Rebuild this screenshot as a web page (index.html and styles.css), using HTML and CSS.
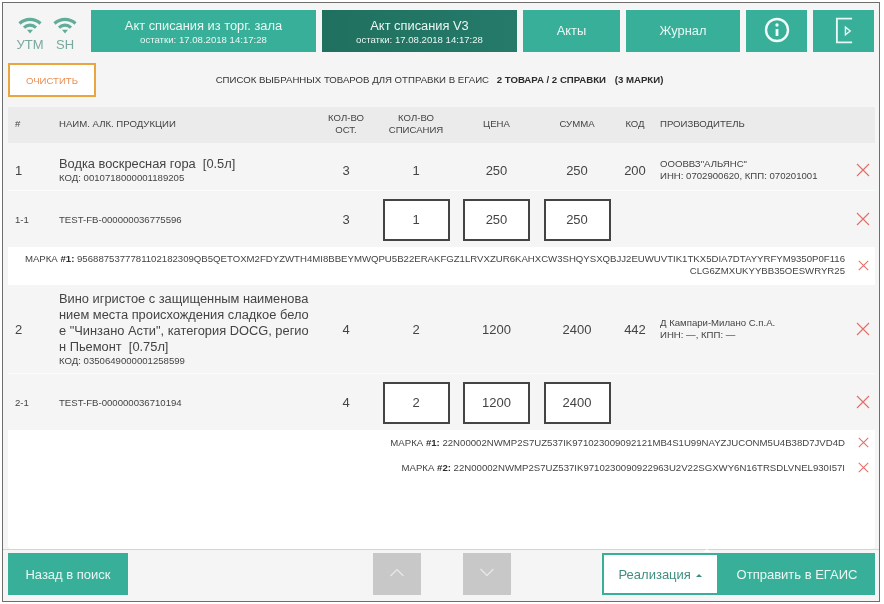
FILE: index.html
```html
<!DOCTYPE html>
<html lang="ru">
<head>
<meta charset="utf-8">
<title>Акт списания</title>
<link rel="stylesheet" href="styles.css">
</head>
<body>
<div class="frame">
  <header class="topbar">
    <div class="signals">
      <div class="signal">
        <svg class="wifi" viewBox="0 0 24 17"><path d="M1.500 6.500C7.500 .9 16.500 .9 22.500 6.500" /><path d="M6 10.600C9.500 7.400 14.500 7.400 18 10.600" /><polygon class="dot" points="9,12.800 15,12.800 12,16.400" /></svg>
        <span>УТМ</span>
      </div>
      <div class="signal">
        <svg class="wifi" viewBox="0 0 24 17"><path d="M1.500 6.500C7.500 .9 16.500 .9 22.500 6.500" /><path d="M6 10.600C9.500 7.400 14.500 7.400 18 10.600" /><polygon class="dot" points="9,12.800 15,12.800 12,16.400" /></svg>
        <span>SH</span>
      </div>
    </div>
    <div class="tab tab-a"><b>Акт списания из торг. зала</b><small>остатки: 17.08.2018 14:17:28</small></div>
    <div class="tab tab-b active"><b>Акт списания V3</b><small>остатки: 17.08.2018 14:17:28</small></div>
    <div class="tab tab-c"><b>Акты</b></div>
    <div class="tab tab-d"><b>Журнал</b></div>
    <div class="tab tab-e">
      <svg class="ic" viewBox="0 0 26 26"><circle cx="13" cy="13" r="11" /><line x1="13" y1="12" x2="13" y2="19" /><circle class="fill" cx="13" cy="8" r="1.700" /></svg>
    </div>
    <div class="tab tab-e">
      <svg class="ic-exit" viewBox="0 0 20 28"><path d="M18 1.500H2V26.500H18" /><path class="thin" d="M11 10.500L16 14.500L11 18.500Z" /></svg>
    </div>
  </header>

  <div class="toolbar">
    <button class="clear">ОЧИСТИТЬ</button>
    <div class="summary">СПИСОК ВЫБРАННЫХ ТОВАРОВ ДЛЯ ОТПРАВКИ В ЕГАИС <strong>2 ТОВАРА / 2 СПРАВКИ</strong> <strong class="marks">(3 МАРКИ)</strong></div>
  </div>

  <div class="grid head">
    <div class="num">#</div>
    <div>НАИМ. АЛК. ПРОДУКЦИИ</div>
    <div class="c">КОЛ-ВО<br>ОСТ.</div>
    <div class="c">КОЛ-ВО<br>СПИСАНИЯ</div>
    <div class="c">ЦЕНА</div>
    <div class="c">СУММА</div>
    <div class="c">КОД</div>
    <div class="maker">ПРОИЗВОДИТЕЛЬ</div>
  </div>

  <main class="list">
    <div class="grid row row-1">
      <div class="num val">1</div>
      <div class="name">Водка воскресная гора&nbsp; [0.5л]<small>КОД: 0010718000001189205</small></div>
      <div class="c val">3</div>
      <div class="c val">1</div>
      <div class="c val">250</div>
      <div class="c val">250</div>
      <div class="c val">200</div>
      <div class="maker">ОООВВЗ"АЛЬЯНС"<br>ИНН: 0702900620, КПП: 070201001</div>
      <svg class="x" viewBox="0 0 14 14"><path d="M1 1L13 13M13 1L1 13" /></svg>
    </div>
    <div class="grid row sub">
      <div class="num tiny">1-1</div>
      <div class="tiny">TEST-FB-000000036775596</div>
      <div class="c val">3</div>
      <div class="c"><div class="box">1</div></div>
      <div class="c"><div class="box">250</div></div>
      <div class="c"><div class="box">250</div></div>
      <div></div>
      <div></div>
      <svg class="x" viewBox="0 0 14 14"><path d="M1 1L13 13M13 1L1 13" /></svg>
    </div>
    <div class="stamps stamps-1">
      <div class="stamp">
        <div class="code">МАРКА <b>#1:</b> 9568875377781102182309QB5QETOXM2FDYZWTH4MI8BBEYMWQPU5B22ERAKFGZ1LRVXZUR6KAHXCW3SHQYSXQBJJ2EUWUVTIK1TKX5DIA7DTAYYRFYM9350P0F116<br>CLG6ZMXUKYYBB35OESWRYR25</div>
        <svg class="x small" viewBox="0 0 14 14"><path d="M1 1L13 13M13 1L1 13" /></svg>
      </div>
    </div>
    <div class="grid row row-2">
      <div class="num val">2</div>
      <div class="name">Вино игристое с защищенным наименова<br>нием места происхождения сладкое бело<br>е "Чинзано Асти", категория DOCG, регио<br>н Пьемонт&nbsp; [0.75л]<small>КОД: 0350649000001258599</small></div>
      <div class="c val">4</div>
      <div class="c val">2</div>
      <div class="c val">1200</div>
      <div class="c val">2400</div>
      <div class="c val">442</div>
      <div class="maker">Д Кампари-Милано С.п.А.<br>ИНН: —, КПП: —</div>
      <svg class="x" viewBox="0 0 14 14"><path d="M1 1L13 13M13 1L1 13" /></svg>
    </div>
    <div class="grid row sub">
      <div class="num tiny">2-1</div>
      <div class="tiny">TEST-FB-000000036710194</div>
      <div class="c val">4</div>
      <div class="c"><div class="box">2</div></div>
      <div class="c"><div class="box">1200</div></div>
      <div class="c"><div class="box">2400</div></div>
      <div></div>
      <div></div>
      <svg class="x" viewBox="0 0 14 14"><path d="M1 1L13 13M13 1L1 13" /></svg>
    </div>
    <div class="stamps stamps-2">
      <div class="stamp line">
        <div class="code">МАРКА <b>#1:</b> 22N00002NWMP2S7UZ537IK971023009092121MB4S1U99NAYZJUCONM5U4B38D7JVD4D</div>
        <svg class="x small" viewBox="0 0 14 14"><path d="M1 1L13 13M13 1L1 13" /></svg>
      </div>
      <div class="stamp line">
        <div class="code">МАРКА <b>#2:</b> 22N00002NWMP2S7UZ537IK9710230090922963U2V22SGXWY6N16TRSDLVNEL930I57I</div>
        <svg class="x small" viewBox="0 0 14 14"><path d="M1 1L13 13M13 1L1 13" /></svg>
      </div>
    </div>
  </main>

  <footer class="footer">
    <button class="btn back">Назад в поиск</button>
    <div class="pager">
      <button class="page"><svg viewBox="0 0 16 9"><path d="M1.500 8L8 1.500L14.500 8" /></svg></button>
      <button class="page"><svg viewBox="0 0 16 9"><path d="M1.500 1L8 7.500L14.500 1" /></svg></button>
    </div>
    <div class="send">
      <button class="type">Реализация <i class="caret"></i></button>
      <button class="btn submit">Отправить в ЕГАИС</button>
    </div>
  </footer>
</div>
</body>
</html>
```
FILE: styles.css
```css
* { box-sizing: border-box; }
html, body { margin: 0; padding: 0; background: #fff; }
body { font-family: "Liberation Sans", Arial, sans-serif; color: #444; }
.frame {
  width: 878px; height: 600px; margin: 2px 0 0 2px;
  border: 1px solid #6e6e6e; background: #f5f5f5;
  display: flex; flex-direction: column; padding: 7px 4px 0 5px;
  filter: blur(.35px);
}
.topbar { display: flex; height: 42px; flex: none; }
.signals { width: 83px; display: flex; padding-left: 10px; gap: 11px; padding-top: 7px; flex: none; }
.signal { width: 24px; display: flex; flex-direction: column; align-items: center; color: #79a99e; font-size: 13px; line-height: 13px; }
.signal span { margin-top: 4px; white-space: nowrap; }
.wifi { width: 24px; height: 17px; display: block; flex: none; }
.wifi path { fill: none; stroke: #62ad99; stroke-width: 3.200; }
.wifi .dot { fill: #62ad99; }
.tab {
  background: #38b099; color: #eaf7f4; margin-right: 6px; height: 42px; flex: none;
  display: flex; flex-direction: column; align-items: center; justify-content: center; text-align: center;
}
.tab b { font-weight: normal; font-size: 12.850px; line-height: 15px; }
.tab small { font-size: 9.600px; line-height: 11px; margin-top: 1px; }
.tab-a { width: 225px; }
.tab-b { width: 195px; }
.tab-c { width: 97px; }
.tab-d { width: 114px; }
.tab-e { width: 61px; }
.tab-e:last-child { margin-right: 0; }
.tab-c b, .tab-d b { margin-top: -1px; }
.active { background: linear-gradient(90deg, #20705f, #257a69); }
.ic { width: 26px; height: 26px; margin-bottom: 2px; }
.ic circle, .ic line { fill: none; stroke: #f2fbf9; stroke-width: 2.400; }
.ic .fill { fill: #f2fbf9; stroke: none; }
.ic line { stroke-width: 2.800; }
.ic-exit { width: 19px; height: 27px; margin: 0 0 2px 2px; }
.ic-exit path { fill: none; stroke: #e6f6f2; stroke-width: 2; }
.ic-exit .thin { stroke-width: 1.500; }

.toolbar { display: flex; align-items: center; height: 34px; margin-top: 11px; flex: none; }
.clear {
  width: 88px; height: 34px; border: 2px solid #e9a63f; background: #fff; color: #e98f55;
  font: 9.600px "Liberation Sans", Arial, sans-serif; padding: 0; flex: none;
}
.summary { flex: 1; text-align: center; font-size: 9.650px; padding: 0 92px 2px 0; color: #333; white-space: nowrap; }
.summary strong { margin-left: 5px; color: #2c2c2c; }
.summary .marks { margin-left: 6px; }

.grid {
  display: grid; align-items: center;
  grid-template-columns: 51px 257px 60px 80px 81px 80px 36px 197px 25px;
}
.head { height: 36px; margin-top: 10px; padding-bottom: 2px; background: #ebebeb; font-size: 9.600px; line-height: 12px; flex: none; color: #444; }
.num { padding-left: 7px; }
.c { text-align: center; }
.maker { padding-left: 7px; font-size: 9.600px; line-height: 12px; white-space: nowrap; }
.list { flex: 1; margin-top: 7px; display: flex; flex-direction: column; min-height: 0; }
.row { flex: none; border-bottom: 1px solid #fbfbfb; }
.row-1 { height: 41px; }
.row-2 { height: 89px; }
.sub { height: 56px; border-bottom: 0; }
.val { font-size: 13px; }
.tiny { font-size: 9.600px; }
.name { font-size: 12.850px; line-height: 16px; white-space: nowrap; }
.name small { display: block; font-size: 9.600px; line-height: 12px; }
.box {
  width: 67px; height: 42px; margin: 1px auto 0; border: 2px solid #444; background: #fff;
  display: flex; align-items: center; justify-content: center; font-size: 13px;
}
.x { width: 14px; height: 14px; justify-self: center; }
.x path { fill: none; stroke: #e4706a; stroke-width: 1.200; }
.x.small { width: 11px; height: 11px; flex: none; }
.x.small path { stroke-width: 1.400; }
.stamps { background: #fff; flex: none; font-size: 9.620px; line-height: 12px; }
.stamps-1 { height: 38px; padding-top: 6px; }
.stamps-2 { flex: 1; border-radius: 0 0 4px 4px; }
.stamp { display: flex; justify-content: flex-end; align-items: center; padding-right: 6px; }
.stamp .code { text-align: right; margin-right: 13px; white-space: nowrap; }
.stamp.line { height: 25px; }
.code b { color: #2c2c2c; }

.footer {
  flex: none; height: 52px; margin: 0 -4px 0 -5px; padding: 3px 4px 0 5px;
  border-top: 1px solid #d4d4d4; display: flex; position: relative;
}
.btn {
  background: #38b099; color: #eaf7f4; border: 0; height: 42px; padding: 0;
  font: 13px "Liberation Sans", Arial, sans-serif; flex: none;
}
.back { width: 120px; }
.pager { position: absolute; left: 370px; top: 3px; display: flex; gap: 42px; }
.page { width: 48px; height: 42px; border: 0; background: #c8c8c8; padding: 0 0 4px; display: flex; align-items: center; justify-content: center; }
.page svg { width: 16px; height: 9px; }
.page path { fill: none; stroke: #e9e9e9; stroke-width: 1.200; }
.send { display: flex; margin-left: auto; position: relative; }
.send::before {
  content: ""; position: absolute; left: 101px; top: -4px;
  border: 4px solid transparent; border-top: 0; border-bottom: 3px solid #fff;
}
.type {
  width: 117px; height: 42px; border: 2px solid #38b099; background: #fff; color: #3f8f80;
  font: 13px "Liberation Sans", Arial, sans-serif; padding: 0;
}
.caret {
  display: inline-block; vertical-align: middle; margin-left: 2px;
  border: 3px solid transparent; border-top: 0; border-bottom: 3px solid #3f8f80;
}
.submit { width: 156px; }
```
